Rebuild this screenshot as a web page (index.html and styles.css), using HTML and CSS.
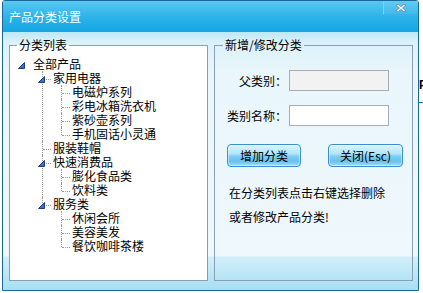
FILE: index.html
```html
<!DOCTYPE html>
<html lang="zh-CN">
<head>
  <meta charset="UTF-8">
  <title>产品分类设置</title>
  <link rel="stylesheet" href="styles.css">
</head>
<body>

  <div class="window">
    <div class="titlebar">
      <span class="title">产品分类设置</span>
      <span class="close">
        <svg width="10" height="8" viewBox="0 0 10 8">
          <path d="M1.5 1 L8.5 7 M8.5 1 L1.5 7" stroke="#7c8f9c" stroke-width="2.6" stroke-linecap="square"/>
          <path d="M1.5 1 L8.5 7 M8.5 1 L1.5 7" stroke="#eef3f6" stroke-width="1.6"/>
        </svg>
      </span>
    </div>

    <div class="content">
      <fieldset class="box list-box">
        <legend>分类列表</legend>
        <ul class="tree">
          <li>
            <div class="row"><span class="tw"><svg width="7" height="7"><polygon points="6.5,0.5 6.5,6.5 0.5,6.5" fill="#3f6fc0" stroke="#1d3c85"/></svg></span>全部产品</div>
            <ul class="l1">
              <li>
                <div class="row"><span class="tw"><svg width="7" height="7"><polygon points="6.5,0.5 6.5,6.5 0.5,6.5" fill="#3f6fc0" stroke="#1d3c85"/></svg></span>家用电器</div>
                <ul class="l2">
                  <li><div class="row"><span class="tw"></span>电磁炉系列</div></li>
                  <li><div class="row"><span class="tw"></span>彩电冰箱洗衣机</div></li>
                  <li><div class="row"><span class="tw"></span>紫砂壶系列</div></li>
                  <li><div class="row"><span class="tw"></span>手机固话小灵通</div></li>
                </ul>
              </li>
              <li><div class="row"><span class="tw"></span>服装鞋帽</div></li>
              <li>
                <div class="row"><span class="tw"><svg width="7" height="7"><polygon points="6.5,0.5 6.5,6.5 0.5,6.5" fill="#3f6fc0" stroke="#1d3c85"/></svg></span>快速消费品</div>
                <ul class="l2">
                  <li><div class="row"><span class="tw"></span>膨化食品类</div></li>
                  <li><div class="row"><span class="tw"></span>饮料类</div></li>
                </ul>
              </li>
              <li>
                <div class="row"><span class="tw"><svg width="7" height="7"><polygon points="6.5,0.5 6.5,6.5 0.5,6.5" fill="#3f6fc0" stroke="#1d3c85"/></svg></span>服务类</div>
                <ul class="l2">
                  <li><div class="row"><span class="tw"></span>休闲会所</div></li>
                  <li><div class="row"><span class="tw"></span>美容美发</div></li>
                  <li><div class="row"><span class="tw"></span>餐饮咖啡茶楼</div></li>
                </ul>
              </li>
            </ul>
          </li>
        </ul>
      </fieldset>

      <fieldset class="box edit-box">
        <legend>新增/修改分类</legend>
        <div class="form">
          <label for="parent">父类别：</label>
          <input type="text" id="parent" class="ro" readonly>
          <label for="name">类别名称：</label>
          <input type="text" id="name">
        </div>
        <div class="buttons">
          <button class="btn">增加分类</button>
          <button class="btn wide">关闭(Esc)</button>
        </div>
        <p class="tip">在分类列表点击右键选择删除<br>或者修改产品分类!</p>
      </fieldset>
    </div>
  </div>

  <div class="behind"><span>P</span></div>

</body>
</html>
```

FILE: styles.css
```css
body {
  margin: 0;
  background: #fff;
  font-family: "Noto Sans CJK SC", sans-serif;
  font-size: 12px;
  color: #000;
  display: flex;
  align-items: flex-start;
  padding-left: 2px;
}
.window {
  width: 415px;
  height: 289px;
  border: 1px solid #1b6797;
  border-radius: 3px 3px 0 0;
  display: flex;
  flex-direction: column;
  flex: none;
}
.titlebar {
  height: 31px;
  display: flex;
  align-items: flex-start;
  background: linear-gradient(#58c8f1, #2fb4ea 50%, #12a6e3);
  color: #fff;
}
.title {
  padding: 9px 0 0 6px;
  line-height: 14px;
}
.close {
  margin-left: auto;
  width: 34px;
  height: 13px;
  border-left: 1px solid #7ad3f3;
  border-bottom: 1px solid #3db1e4;
  background: linear-gradient(#62cbf2, #3dbaed);
  display: flex;
  align-items: center;
  justify-content: center;
}
.close svg {
  display: block;
  margin-top: 1px;
}
.content {
  flex: 1;
  display: flex;
  gap: 6px;
  padding: 6px 5px 0 6px;
  background: linear-gradient(to bottom, #bce8f6 0, #dbf1fa 10px, #e9f6fb 40px, #eff8fc 224px, #d2effa 225px, #a6dff3 100%);
}
.box {
  margin: 0;
  padding: 0;
  width: 199px;
  height: 243px;
  box-sizing: border-box;
  border: 1px solid #8a9fb3;
  min-width: 0;
}
.box legend {
  padding: 0 2px;
  line-height: 14px;
}
.list-box {
  background: #fff;
}
.list-box legend {
  margin-left: 7px;
}
.edit-box legend {
  margin-left: 8px;
}

/* tree */
.tree, .tree ul {
  list-style: none;
  margin: 0;
  padding: 0;
}
.tree {
  margin: 5px 0 0 8px;
}
.tree li {
  position: relative;
}
.row {
  display: flex;
  height: 14px;
  line-height: 14px;
  white-space: nowrap;
}
.tw {
  width: 15px;
  flex: none;
  position: relative;
  z-index: 1;
}
.tw svg {
  display: block;
  margin-top: 5px;
}
.tree .l1 {
  margin-left: 20px;
}
.tree .l2 {
  margin-left: 19px;
}
.l1 > li::before, .l2 > li::before {
  content: "";
  position: absolute;
  left: 4px;
  top: 0;
  bottom: 0;
  border-left: 1px dotted #9a9a9a;
}
.l1 > li:last-child::before, .l2 > li:last-child::before {
  bottom: auto;
  height: 8px;
}
.l1 > li::after, .l2 > li::after {
  content: "";
  position: absolute;
  left: 5px;
  top: 8px;
  width: 8px;
  border-top: 1px dotted #9a9a9a;
}

/* form */
.form {
  display: grid;
  grid-template-columns: 72px 100px;
  column-gap: 2px;
  row-gap: 14px;
  align-items: center;
  margin-top: 18px;
}
.form label {
  text-align: right;
}
.form input {
  height: 21px;
  box-sizing: border-box;
  margin: 0;
  padding: 0 3px;
  border: 1px solid #a5aeb7;
  font-family: inherit;
  font-size: 12px;
  background: #fff;
}
.form .ro {
  background: #f2f2f2;
}
.buttons {
  display: flex;
  gap: 27px;
  margin: 18px 0 0 12px;
}
.btn {
  width: 74px;
  height: 23px;
  padding: 0;
  border: 1px solid #3c8ed0;
  border-radius: 4px;
  background: linear-gradient(#d9f5ff 0, #b3e6fb 40%, #7ccdf4 55%, #67c1ef 78%, #a8def8 100%);
  box-shadow: inset 0 0 0 1px rgba(255, 255, 255, 0.45);
  font-family: inherit;
  font-size: 12px;
  color: #000;
  cursor: pointer;
}
.btn.wide {
  width: 75px;
}
.tip {
  margin: 14px 0 0 14px;
  line-height: 24px;
}
.behind {
  width: 4px;
  height: 102px;
  overflow: hidden;
  border-bottom: 1px solid #2a6aa0;
  flex: none;
}
.behind span {
  display: block;
  margin-top: 78px;
  font: bold 12px "Liberation Sans", sans-serif;
}
```
